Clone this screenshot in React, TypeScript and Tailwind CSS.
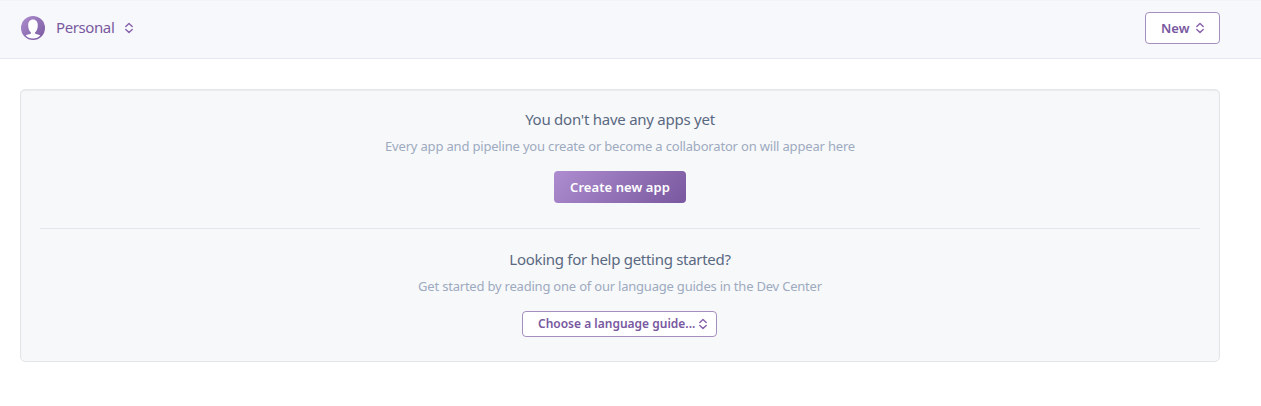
function Caret({ className = "" }: { className?: string }) {
  return (
    <svg className={className} width="8" height="12" viewBox="0 0 8 12" fill="none" stroke="#8661a9" strokeWidth="1.4" strokeLinecap="round" strokeLinejoin="round">
      <path d="M0.8 4.5 4 1.4 7.2 4.5M0.8 7.5 4 10.6 7.2 7.5" />
    </svg>
  );
}

function Avatar() {
  return (
    <svg width="24" height="24" viewBox="0 0 24 24">
      <defs>
        <linearGradient id="avatar" x1="0" y1="0" x2="1" y2="1">
          <stop offset="0" stopColor="#ad8dcf" />
          <stop offset="1" stopColor="#79589f" />
        </linearGradient>
      </defs>
      <circle cx="12" cy="12" r="12" fill="url(#avatar)" />
      <path
        d="M12 3.5C9 3.500 7.200 5.800 7.200 9.200c0 3.200 1 5.800 2.700 7.100v1.300c-.3.900-3.300.700-5.200 1.700C6.400 21.400 9 22.500 12 22.500s5.600-1.100 7.300-3.200c-1.900-1-4.900-.8-5.200-1.700v-1.300c1.700-1.300 2.700-3.900 2.700-7.100C16.800 5.800 15 3.500 12 3.500z"
        fill="#fff"
      />
    </svg>
  );
}

export default function App() {
  return (
    <div className="min-h-[406px] bg-white font-['Noto_Sans',sans-serif]">
      <header className="flex h-[59px] items-start justify-between border-b border-[#e3e7f1] bg-[#f7f8fc] pr-[41px] pl-[21px] shadow-[inset_0_1px_0_#f3f4f7]">
        <button className="mt-4 flex h-6 items-center text-[#79589f]">
          <Avatar />
          <span className="ml-[11px] pb-0.5 text-[15px] leading-[22px] tracking-[-0.4px]">Personal</span>
          <Caret className="ml-[11px]" />
        </button>
        <button className="mt-3 flex h-8 w-[75px] items-center rounded-[4px] border border-[#a58fbf] bg-white pl-[15px] text-[13px] font-semibold text-[#79589f]">
          <span className="pt-0.5">New</span>
          <Caret className="ml-[7px]" />
        </button>
      </header>
      <main className="pt-[30px] pr-[41px] pl-5">
        <div className="h-[273px] rounded-[5px] border border-[#e3e5e8] bg-[#f7f8fa] px-[19px] text-center shadow-[inset_0_1px_1px_#e9ebed]">
          <section className="flex h-[139px] flex-col items-center border-b border-[#e2e6f0] pt-[17px]">
            <h2 className="text-[15px] leading-6 tracking-[-0.25px] text-[#596981]">You don't have any apps yet</h2>
            <p className="mt-[5px] text-[13px] leading-5 tracking-[-0.18px] text-[#9daabf]">Every app and pipeline you create or become a collaborator on will appear here</p>
            <button className="mt-[15px] h-8 w-[132px] rounded-[4px] bg-[linear-gradient(135deg,#ad8dcf,#79589f)] pt-0.5 text-[13px] font-semibold tracking-[0.08px] text-white">Create new app</button>
          </section>
          <section className="flex flex-col items-center pt-[18px]">
            <h2 className="text-[15px] leading-6 tracking-[-0.29px] text-[#596981]">Looking for help getting started?</h2>
            <p className="mt-[5px] text-[13px] leading-5 tracking-[-0.21px] text-[#9daabf]">Get started by reading one of our language guides in the Dev Center</p>
            <button className="mt-[15px] mr-px flex h-[26px] w-[195px] items-center rounded-[4px] border border-[#a58fbf] bg-white pl-[15px] text-[12px] font-semibold text-[#79589f]">
              <span>Choose a language guide...</span>
              <Caret className="ml-1" />
            </button>
          </section>
        </div>
      </main>
    </div>
  );
}
